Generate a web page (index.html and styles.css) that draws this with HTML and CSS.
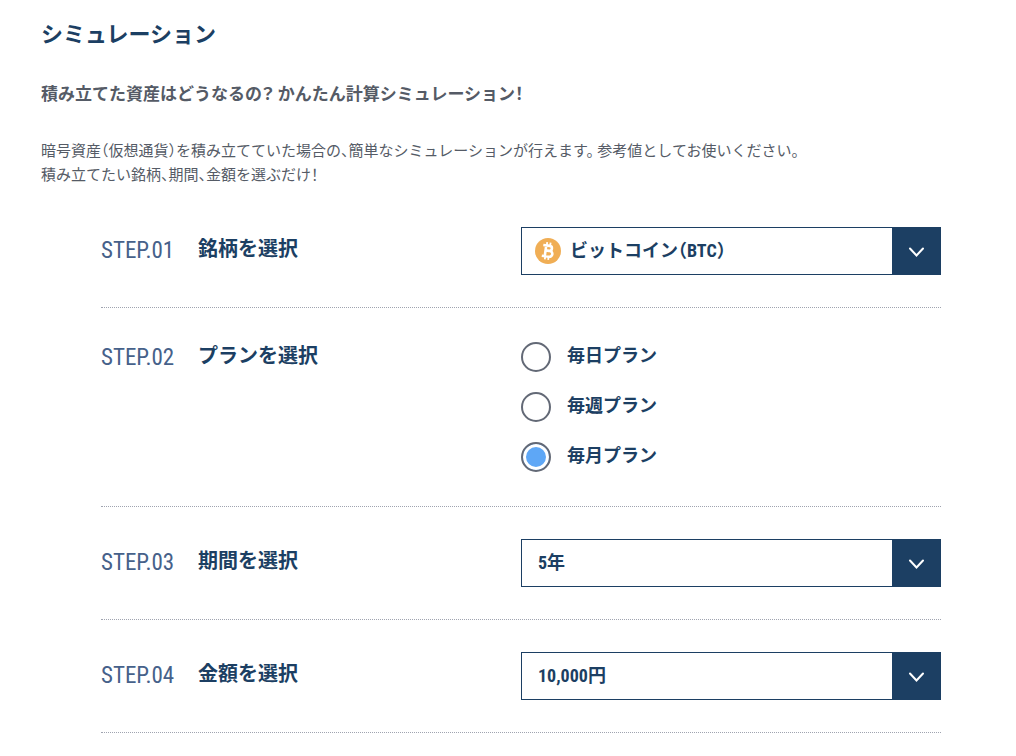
FILE: index.html
```html
<!DOCTYPE html>
<html lang="ja">
<head>
<meta charset="utf-8">
<meta name="viewport" content="width=device-width, initial-scale=1">
<title>シミュレーション</title>
<link rel="stylesheet" href="styles.css">
</head>
<body>
<main class="simulation">
  <h1 class="title">シミュレーション</h1>
  <h2 class="subtitle">積み立てた資産はどうなるの<span class="mark">？</span> かんたん計算シミュレーション！</h2>
  <p class="lead">暗号資産（仮想通貨）を積み立てていた場合の、簡単なシミュレーションが行えます。 参考値としてお使いください。<br>積み立てたい銘柄、期間、金額を選ぶだけ！</p>
  <form class="steps">
    <div class="step">
      <span class="number">STEP.01</span>
      <label class="name" for="coin">銘柄を選択</label>
      <div class="picker">
        <svg class="coin" viewBox="0 0 26 26" aria-hidden="true"><circle cx="13" cy="13" r="13" fill="#f0ae55"/><g transform="rotate(8 13 13)" fill="none" stroke="#fff" stroke-width="2.6"><path d="M7.500 7.700h6.500a2.500 2.500 0 0 1 0 5H10.500h4.300a2.900 2.900 0 0 1 0 5.800H7.500M10.500 7.700v10.800"/><path stroke-width="1.800" d="M11 4.300v3M14.400 4.300v3M11 18.700v3M14.400 18.700v3"/></g></svg>
        <select class="select with-coin" id="coin"><option>ビットコイン（BTC）</option></select>
        <span class="arrow"><svg viewBox="0 0 16 12" aria-hidden="true"><path d="M2 2.500l6.500 7 6.500-7"/></svg></span>
      </div>
    </div>
    <div class="step plans">
      <span class="number">STEP.02</span>
      <span class="name" id="plan-name">プランを選択</span>
      <div class="options" role="radiogroup" aria-labelledby="plan-name">
        <label class="option"><input type="radio" name="plan"><span>毎日プラン</span></label>
        <label class="option"><input type="radio" name="plan"><span>毎週プラン</span></label>
        <label class="option"><input type="radio" name="plan" checked><span>毎月プラン</span></label>
      </div>
    </div>
    <div class="step">
      <span class="number">STEP.03</span>
      <label class="name" for="period">期間を選択</label>
      <div class="picker">
        <select class="select" id="period"><option>5年</option></select>
        <span class="arrow"><svg viewBox="0 0 16 12" aria-hidden="true"><path d="M2 2.500l6.500 7 6.500-7"/></svg></span>
      </div>
    </div>
    <div class="step">
      <span class="number">STEP.04</span>
      <label class="name" for="amount">金額を選択</label>
      <div class="picker">
        <select class="select" id="amount"><option>10,000円</option></select>
        <span class="arrow"><svg viewBox="0 0 16 12" aria-hidden="true"><path d="M2 2.500l6.500 7 6.500-7"/></svg></span>
      </div>
    </div>
  </form>
</main>
</body>
</html>
```
FILE: styles.css
```css
* { box-sizing: border-box; }
body {
  margin: 0;
  background: #fff;
  color: #555b66;
  font-family: "Roboto Condensed", Roboto, "Noto Sans CJK JP", sans-serif;
  font-feature-settings: "halt";
}
.simulation { padding: 17px 75px 0 41px; }
.title { margin: 0; font-size: 22px; line-height: 36px; color: #1c3f63; }
.subtitle { margin: 27px 0 0; font-size: 17px; line-height: 28px; }
.mark { font-feature-settings: "palt"; }
.lead { margin: 31px 0 0; font-size: 15px; line-height: 24px; }
.steps { margin: 8px 0 0 60px; }
.step {
  display: grid;
  grid-template-columns: 97px 1fr 420px;
  align-items: center;
  padding: 32px 0;
  border-bottom: 1px dotted #a0a4b0;
  color: #1c3f63;
}
.plans { align-items: start; }
.number { font-size: 23px; line-height: 36px; color: #46618a; }
.name { padding-bottom: 4px; font-size: 20px; line-height: 32px; font-weight: 700; }
.picker { display: flex; position: relative; height: 48px; border: 1px solid #1c3f63; }
.select {
  flex: 1;
  min-width: 0;
  padding: 0 16px 2px;
  border: 0;
  appearance: none;
  background: #fff;
  color: #1c3f63;
  font: 700 18px "Roboto Condensed", Roboto, "Noto Sans CJK JP", sans-serif;
  font-feature-settings: "halt";
}
.with-coin { padding-left: 48px; }
.coin { position: absolute; left: 13px; top: 10px; width: 26px; height: 26px; }
.arrow { display: grid; place-items: center; width: 48px; padding-top: 2px; background: #1c3f63; pointer-events: none; }
.arrow svg { width: 16px; height: 12px; fill: none; stroke: #fff; stroke-width: 2; stroke-linecap: round; }
.options { display: grid; gap: 20px; padding: 2px 0; }
.option { display: flex; align-items: center; gap: 16px; font-size: 18px; line-height: 26px; font-weight: 700; }
.option span { padding-bottom: 2px; }
.option input {
  appearance: none;
  width: 30px;
  height: 30px;
  margin: 0;
  padding: 3px;
  border: 2px solid #636976;
  border-radius: 50%;
}
.option input:checked { background: #5ea7f6 content-box; }
.option input:checked { box-shadow: inset 0 0 0 3px #fff; background: #5ea7f6; }
```
